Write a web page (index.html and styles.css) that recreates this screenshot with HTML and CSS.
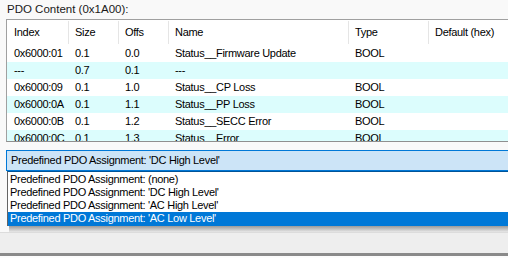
FILE: index.html
```html
<!DOCTYPE html>
<html>
<head>
<meta charset="utf-8">
<link rel="stylesheet" href="styles.css">
</head>
<body>
<div class="page">
  <div class="caption">PDO Content (0x1A00):</div>
  <div class="listview">
    <div class="row header">
      <div class="c c1">Index</div><div class="c c2">Size</div><div class="c c3">Offs</div><div class="c c4">Name</div><div class="c c5">Type</div><div class="c c6">Default (hex)</div>
    </div>
    <div class="row">
      <div class="c c1">0x6000:01</div><div class="c c2">0.1</div><div class="c c3">0.0</div><div class="c c4">Status__Firmware Update</div><div class="c c5">BOOL</div><div class="c c6"></div>
    </div>
    <div class="row alt">
      <div class="c c1">---</div><div class="c c2">0.7</div><div class="c c3">0.1</div><div class="c c4">---</div><div class="c c5"></div><div class="c c6"></div>
    </div>
    <div class="row">
      <div class="c c1">0x6000:09</div><div class="c c2">0.1</div><div class="c c3">1.0</div><div class="c c4">Status__CP Loss</div><div class="c c5">BOOL</div><div class="c c6"></div>
    </div>
    <div class="row alt">
      <div class="c c1">0x6000:0A</div><div class="c c2">0.1</div><div class="c c3">1.1</div><div class="c c4">Status__PP Loss</div><div class="c c5">BOOL</div><div class="c c6"></div>
    </div>
    <div class="row">
      <div class="c c1">0x6000:0B</div><div class="c c2">0.1</div><div class="c c3">1.2</div><div class="c c4">Status__SECC Error</div><div class="c c5">BOOL</div><div class="c c6"></div>
    </div>
    <div class="row alt">
      <div class="c c1">0x6000:0C</div><div class="c c2">0.1</div><div class="c c3">1.3</div><div class="c c4">Status__Error</div><div class="c c5">BOOL</div><div class="c c6"></div>
    </div>
  </div>
  <div class="combo">Predefined PDO Assignment: 'DC High Level'</div>
  <div class="dropdown">
    <div class="opt">Predefined PDO Assignment: (none)</div>
    <div class="opt">Predefined PDO Assignment: 'DC High Level'</div>
    <div class="opt">Predefined PDO Assignment: 'AC High Level'</div>
    <div class="opt sel">Predefined PDO Assignment: 'AC Low Level'</div>
  </div>
  <div class="shadow"></div>
  <div class="footer"></div>
</div>
</body>
</html>
```

FILE: styles.css
```css
html, body {
  margin: 0;
  padding: 0;
}
body {
  width: 508px;
  height: 258px;
  overflow: hidden;
  background: #f9f9f9;
  font-family: "Liberation Sans", Arial, sans-serif;
  font-size: 11px;
  color: #000;
}
.page {
  display: flex;
  flex-direction: column;
  height: 258px;
}
.caption {
  height: 19px;
  line-height: 18px;
  padding-left: 7px;
  font-size: 11.5px;
  color: #1a1a1a;
}
.listview {
  margin-left: 6px;
  width: 520px;
  height: 121px;
  border: 1px solid #a0a0a0;
  border-bottom-color: #8f8f8f;
  border-right: none;
  background: #fff;
  overflow: hidden;
  flex: none;
}
.row {
  display: flex;
  height: 17px;
  line-height: 17px;
  font-size: 11px;
  letter-spacing: -0.3px;
  white-space: nowrap;
}
.row.alt {
  background: #dcfdfd;
}
.row.header {
  height: 25px;
  line-height: 25px;
}
.c {
  flex: none;
  padding-left: 6px;
  box-sizing: border-box;
  overflow: hidden;
}
.header .c {
  border-right: 1px solid #e5e5e5;
  height: 23px;
  margin-top: 1px;
  line-height: 23px;
}
.c1 { width: 62px; padding-left: 7px; }
.c2 { width: 50px; }
.c3 { width: 50px; }
.c4 { width: 180px; }
.c5 { width: 80px; }
.c6 { width: 80px; }
.combo {
  margin-top: 8px;
  margin-left: 6px;
  height: 19px;
  line-height: 19px;
  border: 1px solid #0078d7;
  border-right: none;
  background: #cce4f7;
  padding-left: 4px;
  font-size: 11px;
  letter-spacing: -0.3px;
  flex: none;
}
.dropdown {
  margin-left: 7px;
  border-top: 1px solid #005499;
  border-left: 1px solid #646464;
  background: #fff;
  padding-top: 1px;
  flex: none;
}
.opt {
  height: 13px;
  line-height: 13px;
  padding-left: 2px;
  font-size: 11px;
  letter-spacing: -0.3px;
  white-space: nowrap;
}
.opt.sel {
  height: 14px;
  background: #0078d7;
  color: #fff;
}
.shadow {
  height: 6px;
  margin-left: 9px;
  background: linear-gradient(#9a9a9a, #e8e8e8);
  flex: none;
}
.footer {
  flex: 1;
  border-top: 1px solid #dcdcdc;
  background: #eeeeee;
  box-shadow: inset 0 -2px 0 #fcfcfc, inset 0 -5px 0 #8a8a8a;
}
```
